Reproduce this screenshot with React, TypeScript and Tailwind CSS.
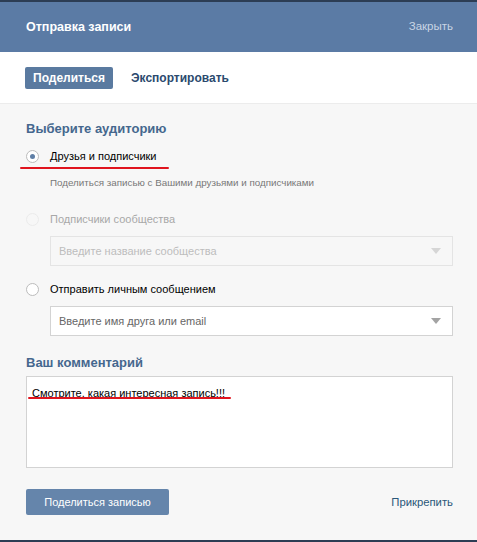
import { useState } from 'react'

type Audience = 'friends' | 'community' | 'message'

export default function App() {
  const [audience, setAudience] = useState<Audience>('friends')
  const [tab, setTab] = useState<'share' | 'export'>('share')

  return (
    <div
      className="w-full h-screen flex flex-col bg-[#f7f7f7] overflow-hidden"
      style={{ fontFamily: '"Liberation Sans", Arial, sans-serif' }}
    >
      {/* top edge of the page behind the dialog */}
      <div className="h-[2px] bg-[#2c3d54] shrink-0" />

      {/* header */}
      <div className="h-[50px] shrink-0 bg-[#5b7ba5] flex items-center justify-between pl-[26px] pr-[24px]">
        <span className="text-white text-[12.5px] font-bold">Отправка записи</span>
        <button className="text-[#c9d5e4] text-[11.5px]">Закрыть</button>
      </div>

      {/* tabs */}
      <div className="h-[52px] shrink-0 bg-white border-b border-[#ececec] flex items-center gap-[18px] px-[25px]">
        <button
          onClick={() => setTab('share')}
          className={
            tab === 'share'
              ? 'h-[22px] px-[8px] rounded-[2px] bg-[#5a7aa0] text-white text-[12px] font-bold'
              : 'h-[22px] px-[8px] text-[#2b4a6e] text-[12px] font-bold'
          }
        >
          Поделиться
        </button>
        <button
          onClick={() => setTab('export')}
          className={
            tab === 'export'
              ? 'h-[22px] px-[8px] rounded-[2px] bg-[#5a7aa0] text-white text-[12px] font-bold'
              : 'h-[22px] text-[#2b4a6e] text-[12px] font-bold'
          }
        >
          Экспортировать
        </button>
      </div>

      {/* body */}
      <div className="flex flex-col pl-[26px] pr-[24px] pt-[15px]">
        <h2 className="text-[13px] font-bold text-[#45678e] leading-[20px]">Выберите аудиторию</h2>

        <div className="mt-[10px] relative">
          <Radio
            label="Друзья и подписчики"
            checked={audience === 'friends'}
            onClick={() => setAudience('friends')}
          />
          <div className="absolute left-[-6px] top-[18px] w-[149px] h-[2px] rounded-full bg-[#e0141e]" />
        </div>
        <p className="mt-[13px] ml-[24px] text-[9.8px] text-[#777] leading-[14px]">
          Поделиться записью с Вашими друзьями и подписчиками
        </p>

        <div className="mt-[22px]">
          <Radio label="Подписчики сообщества" checked={false} disabled onClick={() => {}} />
        </div>
        <Select placeholder="Введите название сообщества" disabled className="mt-[10px]" />

        <div className="mt-[16px]">
          <Radio
            label="Отправить личным сообщением"
            checked={audience === 'message'}
            onClick={() => setAudience('message')}
          />
        </div>
        <Select placeholder="Введите имя друга или email" className="mt-[10px]" />

        <h2 className="mt-[17px] text-[13px] font-bold text-[#45678e] leading-[20px]">Ваш комментарий</h2>
        <div className="mt-[3px] h-[92px] bg-white border border-[#d3d3d3] px-[5px] py-[3px] relative">
          <span className="text-[11px] text-black leading-[15px]">Смотрите, какая интересная запись!!!</span>
          <div className="absolute left-[1px] top-[20px] w-[203px] h-[2px] rounded-full bg-[#e0141e]" />
        </div>

        <div className="mt-[21px] flex items-center justify-between">
          <button className="h-[26px] w-[143px] rounded-[2px] bg-[#6585ab] text-white text-[11px]">
            Поделиться записью
          </button>
          <button className="text-[11.3px] text-[#2b587a]">Прикрепить</button>
        </div>
      </div>

      <div className="mt-auto h-[2px] bg-[#2c3d54] shrink-0" />
    </div>
  )
}

function Radio({
  label,
  checked,
  disabled,
  onClick,
}: {
  label: string
  checked: boolean
  disabled?: boolean
  onClick: () => void
}) {
  return (
    <button onClick={onClick} disabled={disabled} className="flex items-center gap-[11px] h-[14px]">
      <span
        className={
          disabled
            ? 'w-[13px] h-[13px] rounded-full border border-[#ebebeb] bg-[#f7f7f7]'
            : 'w-[13px] h-[13px] rounded-full border border-[#bcbcbc] bg-white flex items-center justify-center'
        }
      >
        {checked && <span className="w-[5px] h-[5px] rounded-full bg-[#5f7fa6]" />}
      </span>
      <span className={disabled ? 'text-[11px] text-[#a8a8a8]' : 'text-[11px] text-black'}>{label}</span>
    </button>
  )
}

function Select({
  placeholder,
  disabled,
  className,
}: {
  placeholder: string
  disabled?: boolean
  className?: string
}) {
  return (
    <div
      className={
        (disabled
          ? 'bg-[#f7f7f7] border-[#e4e4e4] text-[#bdbdbd] '
          : 'bg-white border-[#d3d3d3] text-[#666] ') +
        'ml-[24px] h-[30px] border flex items-center justify-between px-[8px] text-[11px] ' +
        (className ?? '')
      }
    >
      <span>{placeholder}</span>
      <svg width="10" height="6" viewBox="0 0 10 6" className="mr-[3px]">
        <path d="M0 0h10L5 6z" fill={disabled ? '#d6d6d6' : '#a3a3a3'} />
      </svg>
    </div>
  )
}
